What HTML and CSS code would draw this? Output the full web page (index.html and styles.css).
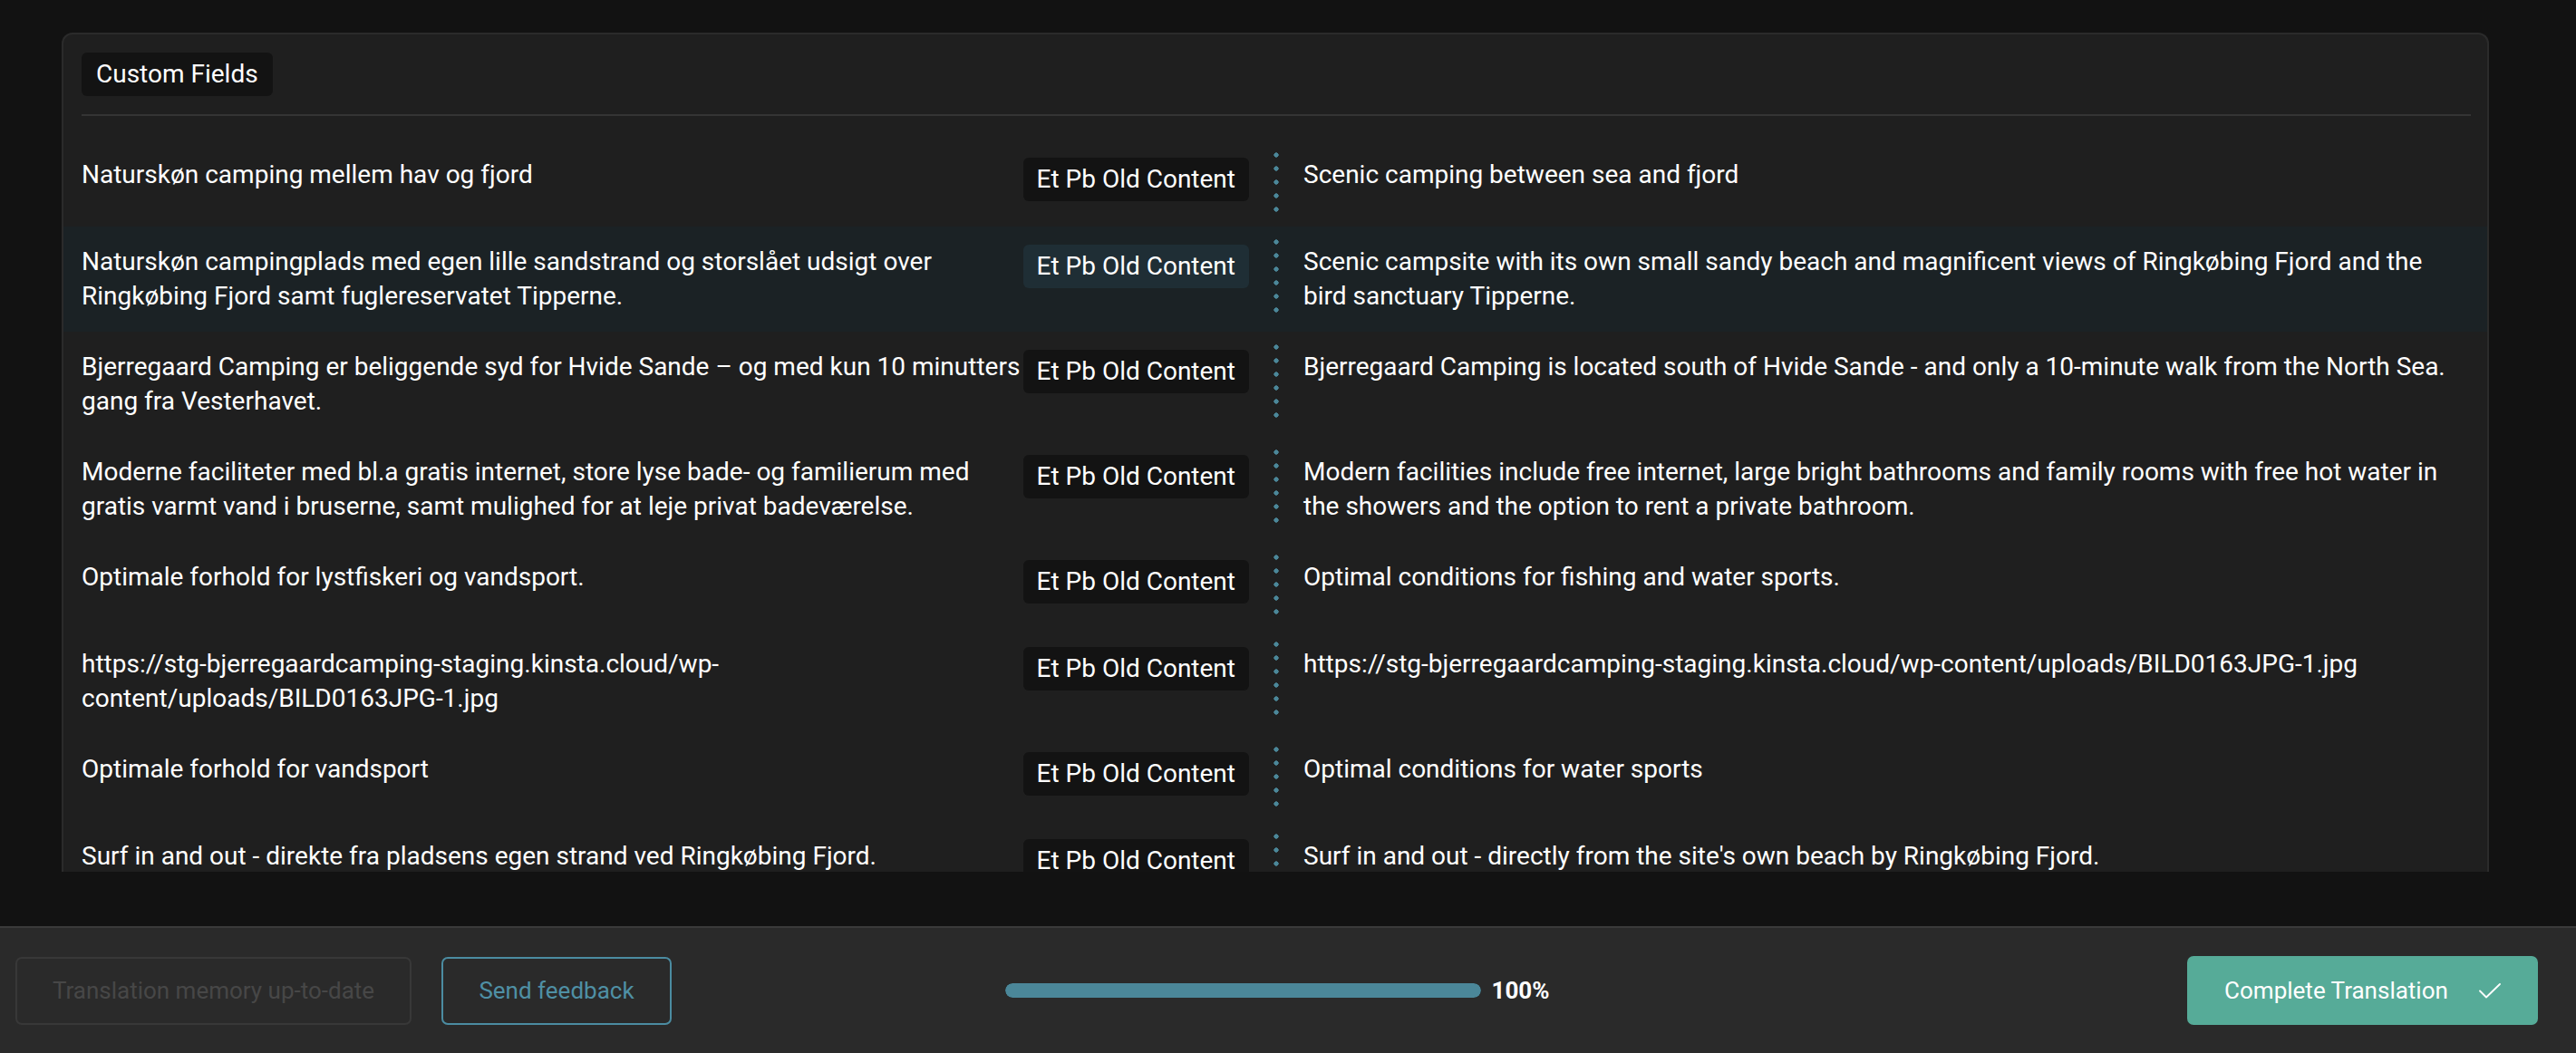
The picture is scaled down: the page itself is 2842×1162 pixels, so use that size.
FILE: index.html
```html
<!DOCTYPE html>
<html lang="en">
<head>
<meta charset="utf-8">
<title>Custom Fields</title>
<link rel="stylesheet" href="styles.css">
</head>
<body>
<div class="app">
  <main class="scroll">
    <section class="card">
      <header class="card-head">
        <span class="tag">Custom Fields</span>
        <div class="sep"></div>
      </header>
      <div class="rows">
        <div class="row">
          <div class="src">
            <div class="src-text">Naturskøn camping mellem hav og fjord</div>
            <span class="field">Et Pb Old Content</span>
          </div>
          <div class="dots"></div>
          <div class="dst">Scenic camping between sea and fjord</div>
        </div>
        <div class="row active">
          <div class="src">
            <div class="src-text">Naturskøn campingplads med egen lille sandstrand og storslået udsigt over Ringkøbing Fjord samt fuglereservatet Tipperne.</div>
            <span class="field">Et Pb Old Content</span>
          </div>
          <div class="dots"></div>
          <div class="dst">Scenic campsite with its own small sandy beach and magnificent views of Ringkøbing Fjord and the bird sanctuary Tipperne.</div>
        </div>
        <div class="row">
          <div class="src">
            <div class="src-text">Bjerregaard Camping er beliggende syd for Hvide Sande – og med kun 10 minutters gang fra Vesterhavet.</div>
            <span class="field">Et Pb Old Content</span>
          </div>
          <div class="dots"></div>
          <div class="dst">Bjerregaard Camping is located south of Hvide Sande - and only a 10-minute walk from the North Sea.</div>
        </div>
        <div class="row">
          <div class="src">
            <div class="src-text">Moderne faciliteter med bl.a gratis internet, store lyse bade- og familierum med gratis varmt vand i bruserne, samt mulighed for at leje privat badeværelse.</div>
            <span class="field">Et Pb Old Content</span>
          </div>
          <div class="dots"></div>
          <div class="dst">Modern facilities include free internet, large bright bathrooms and family rooms with free hot water in the showers and the option to rent a private bathroom.</div>
        </div>
        <div class="row">
          <div class="src">
            <div class="src-text">Optimale forhold for lystfiskeri og vandsport.</div>
            <span class="field">Et Pb Old Content</span>
          </div>
          <div class="dots"></div>
          <div class="dst">Optimal conditions for fishing and water sports.</div>
        </div>
        <div class="row">
          <div class="src">
            <div class="src-text">https://stg-bjerregaardcamping-staging.kinsta.cloud/wp-content/uploads/BILD0163JPG-1.jpg</div>
            <span class="field">Et Pb Old Content</span>
          </div>
          <div class="dots"></div>
          <div class="dst">https://stg-bjerregaardcamping-staging.kinsta.cloud/wp-content/uploads/BILD0163JPG-1.jpg</div>
        </div>
        <div class="row">
          <div class="src">
            <div class="src-text">Optimale forhold for vandsport</div>
            <span class="field">Et Pb Old Content</span>
          </div>
          <div class="dots"></div>
          <div class="dst">Optimal conditions for water sports</div>
        </div>
        <div class="row">
          <div class="src">
            <div class="src-text">Surf in and out - direkte fra pladsens egen strand ved Ringkøbing Fjord.</div>
            <span class="field">Et Pb Old Content</span>
          </div>
          <div class="dots"></div>
          <div class="dst">Surf in and out - directly from the site's own beach by Ringkøbing Fjord.</div>
        </div>
      </div>
    </section>
  </main>
  <footer class="footer">
    <div class="foot-left">
      <button class="btn btn-disabled" type="button">Translation memory up-to-date</button>
      <button class="btn btn-outline" type="button">Send feedback</button>
    </div>
    <div class="progress">
      <div class="bar"><div class="bar-fill"></div></div>
      <span class="pct">100%</span>
    </div>
    <div class="foot-right">
      <button class="btn btn-primary" type="button"><span class="btn-label">Complete Translation</span>
        <svg class="check" width="24" height="17" viewBox="0 0 24 17" aria-hidden="true"><polyline points="1,8.5 8,15.5 23,1" fill="none" stroke="#ffffff" stroke-width="1.8" stroke-linecap="round" stroke-linejoin="round"/></svg>
      </button>
    </div>
  </footer>
</div>
</body>
</html>
```

FILE: styles.css
```css
* { box-sizing: border-box; }
html, body { margin: 0; padding: 0; }
body {
  background: #121212;
  color: #ffffff;
  font-family: Roboto, "Liberation Sans", Arial, sans-serif;
  font-size: 28px;
  line-height: 38px;
  width: 2842px;
  height: 1162px;
  overflow: hidden;
}
.app {
  display: flex;
  flex-direction: column;
  height: 1162px;
}
.scroll {
  height: 962px;
  overflow: hidden;
  padding: 36px 96px 0 68px;
  flex: none;
}
.card {
  background: #1f1f1f;
  border: 2px solid #2b2b2b;
  border-bottom: none;
  border-radius: 12px 12px 0 0;
}
.card-head {
  padding: 20px 18px 26px 20px;
}
.tag {
  display: inline-block;
  background: #131313;
  border-radius: 6px;
  padding: 5px 16px;
  line-height: 38px;
}
.sep {
  height: 2px;
  background: #343434;
  margin-top: 20px;
}
.row {
  display: grid;
  grid-template-columns: 1fr 6px 1fr;
  grid-auto-rows: minmax(56px, auto);
  column-gap: 27px;
  padding: 20px 18px 20px 20px;
  align-items: start;
}
.row.active { background: #1b2225; }
.src {
  display: flex;
  align-items: flex-start;
}
.src-text { flex: 1; min-width: 0; }
.field {
  flex: none;
  background: #131313;
  border-radius: 6px;
  padding: 5px 15px;
  line-height: 38px;
  white-space: nowrap;
}
.row.active .field { background: #1f2e35; }
.dots {
  align-self: stretch;
  margin: -6px 0;
  background-image: radial-gradient(circle at 3px 3px, #4b8799 2.4px, transparent 2.9px);
  background-size: 6px 15px;
  background-repeat: repeat-y;
}
.dst { min-width: 0; }

.footer {
  flex: 1;
  background: #2a2a2a;
  border-top: 2px solid #3a3a3a;
  margin-top: 60px;
  display: grid;
  grid-template-columns: 1fr auto 1fr;
  align-items: center;
  padding: 0 42px 0 17px;
}
.foot-left { display: flex; gap: 33px; }
.foot-right { display: flex; justify-content: flex-end; }
.btn {
  font-family: Roboto, "Liberation Sans", Arial, sans-serif;
  font-size: 26px;
  line-height: 38px;
  height: 75px;
  border-radius: 7px;
  background: transparent;
  display: inline-flex;
  align-items: center;
  justify-content: center;
  white-space: nowrap;
  padding: 0;
  cursor: pointer;
}
.btn-disabled {
  border: 2px solid #383838;
  color: #474747;
  width: 437px;
}
.btn-outline {
  border: 2px solid #4b8ca1;
  color: #4f90a5;
  width: 254px;
}
.btn-primary {
  border: none;
  background: #56ab98;
  color: #ffffff;
  height: 76px;
  width: 387px;
  gap: 34px;
}
.check { display: block; flex: none; }
.progress {
  display: flex;
  align-items: center;
  gap: 12px;
}
.bar {
  width: 525px;
  height: 16px;
  border-radius: 8px;
  background: #1c1c1c;
  overflow: hidden;
}
.bar-fill {
  width: 100%;
  height: 100%;
  background: #4b8799;
  border-radius: 8px;
}
.pct {
  font-weight: 700;
  font-size: 26px;
  width: 63px;
}
```
